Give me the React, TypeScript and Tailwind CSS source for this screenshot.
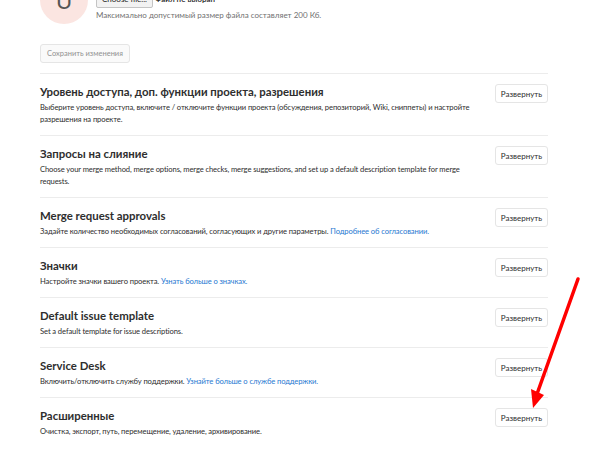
import type { ReactNode } from 'react';

type Section = {
  title: string;
  body: ReactNode;
};

const SECTIONS: Section[] = [
  {
    title: 'Уровень доступа, доп. функции проекта, разрешения',
    body: 'Выберите уровень доступа, включите / отключите функции проекта (обсуждения, репозиторий, Wiki, сниппеты) и настройте разрешения на проекте.',
  },
  {
    title: 'Запросы на слияние',
    body: 'Choose your merge method, merge options, merge checks, merge suggestions, and set up a default description template for merge requests.',
  },
  {
    title: 'Merge request approvals',
    body: (
      <>
        Задайте количество необходимых согласований, согласующих и другие параметры.{' '}
        <a className="text-[#1f78d1]">Подробнее об согласовании.</a>
      </>
    ),
  },
  {
    title: 'Значки',
    body: (
      <>
        Настройте значки вашего проекта. <a className="text-[#1f78d1]">Узнать больше о значках.</a>
      </>
    ),
  },
  {
    title: 'Default issue template',
    body: 'Set a default template for issue descriptions.',
  },
  {
    title: 'Service Desk',
    body: (
      <>
        Включить/отключить службу поддержки.{' '}
        <a className="text-[#1f78d1]">Узнайте больше о службе поддержки.</a>
      </>
    ),
  },
  {
    title: 'Расширенные',
    body: 'Очистка, экспорт, путь, перемещение, удаление, архивирование.',
  },
];

function SettingsSection({ title, body }: Section) {
  return (
    <section className="flex items-start justify-between border-t border-[#ececec] pt-[9px] pb-[10px]">
      <div className="w-[448px]">
        <h4 className="text-[11.4px] leading-[18px] font-bold text-[#2e2e2e]">{title}</h4>
        <p className="text-[7.6px] leading-[12px] tracking-[-0.1px] text-[#2e2e2e]">{body}</p>
      </div>
      <button className="mt-px h-[19px] w-[53px] rounded-[3px] border border-[#e5e5e5] bg-white text-[8px] text-[#2e2e2e]">
        Развернуть
      </button>
    </section>
  );
}

export default function App() {
  return (
    <div className="relative h-[468px] w-[598px] overflow-hidden bg-white font-['Lato',sans-serif]">
      <div className="-mt-[24px] ml-[40px] w-[508px]">
        {/* avatar upload */}
        <div className="flex gap-2">
          <div className="flex h-[48px] w-[48px] items-center justify-center rounded-full bg-[#fbe5e1] text-[22px] text-[#555]">
            U
          </div>
          <div className="pt-[14px]">
            <div className="flex items-center gap-[2px]">
              <span className="h-[18px] rounded-[2px] border border-[#c4c4c4] bg-[#f2f2f2] px-[5px] text-[8px] leading-[16px] text-[#222]">
                Choose file...
              </span>
              <span className="text-[8px] font-semibold text-[#222]">Файл не выбран</span>
            </div>
            <p className="mt-px text-[8px] leading-[12px] text-[#707070]">
              Максимально допустимый размер файла составляет 200 Кб.
            </p>
          </div>
        </div>

        <button className="mt-[20px] h-[19px] rounded-[3px] border border-[#e5e5e5] bg-[#fafafa] px-[6px] text-[7.5px] text-[#919191]">
          Сохранить изменения
        </button>

        <div className="mt-[10px]">
          {SECTIONS.map((s) => (
            <SettingsSection key={s.title} {...s} />
          ))}
        </div>
      </div>

      {/* red annotation arrow */}
      <svg className="absolute left-0 top-0" width="598" height="468" viewBox="0 0 598 468">
        <line x1="578" y1="279" x2="537" y2="394" stroke="#f00" strokeWidth="3.5" strokeLinecap="round" />
        <polygon points="531,389 544,395 533,408" fill="#f00" />
      </svg>
    </div>
  );
}
